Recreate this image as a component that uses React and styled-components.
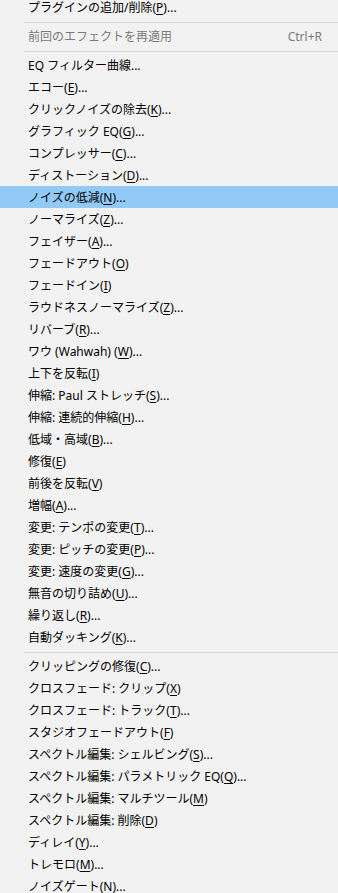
import React from 'react';
import styled, { createGlobalStyle } from 'styled-components';

const GlobalStyle = createGlobalStyle`
  html, body {
    margin: 0;
    padding: 0;
    background: #f2f2f2;
  }
  body {
    font-family: 'Noto Sans', 'Noto Sans CJK JP', sans-serif;
  }
`;

const groups = [
  [{ label: 'プラグインの追加/削除', key: 'P', dots: true }],
  [{ label: '前回のエフェクトを再適用', shortcut: 'Ctrl+R', disabled: true }],
  [
    { label: 'EQ フィルター曲線', dots: true },
    { label: 'エコー', key: 'E', dots: true },
    { label: 'クリックノイズの除去', key: 'K', dots: true },
    { label: 'グラフィック EQ', key: 'G', dots: true },
    { label: 'コンプレッサー', key: 'C', dots: true },
    { label: 'ディストーション', key: 'D', dots: true },
    { label: 'ノイズの低減', key: 'N', dots: true, active: true },
    { label: 'ノーマライズ', key: 'Z', dots: true },
    { label: 'フェイザー', key: 'A', dots: true },
    { label: 'フェードアウト', key: 'O' },
    { label: 'フェードイン', key: 'I' },
    { label: 'ラウドネスノーマライズ', key: 'Z', dots: true },
    { label: 'リバーブ', key: 'R', dots: true },
    { label: 'ワウ (Wahwah) ', key: 'W', dots: true },
    { label: '上下を反転', key: 'I' },
    { label: '伸縮: Paul ストレッチ', key: 'S', dots: true },
    { label: '伸縮: 連続的伸縮', key: 'H', dots: true },
    { label: '低域・高域', key: 'B', dots: true },
    { label: '修復', key: 'E' },
    { label: '前後を反転', key: 'V' },
    { label: '増幅', key: 'A', dots: true },
    { label: '変更: テンポの変更', key: 'T', dots: true },
    { label: '変更: ピッチの変更', key: 'P', dots: true },
    { label: '変更: 速度の変更', key: 'G', dots: true },
    { label: '無音の切り詰め', key: 'U', dots: true },
    { label: '繰り返し', key: 'R', dots: true },
    { label: '自動ダッキング', key: 'K', dots: true },
  ],
  [
    { label: 'クリッピングの修復', key: 'C', dots: true },
    { label: 'クロスフェード: クリップ', key: 'X' },
    { label: 'クロスフェード: トラック', key: 'T', dots: true },
    { label: 'スタジオフェードアウト', key: 'F' },
    { label: 'スペクトル編集: シェルビング', key: 'S', dots: true },
    { label: 'スペクトル編集: パラメトリック EQ', key: 'Q', dots: true },
    { label: 'スペクトル編集: マルチツール', key: 'M' },
    { label: 'スペクトル編集: 削除', key: 'D' },
    { label: 'ディレイ', key: 'Y', dots: true },
    { label: 'トレモロ', key: 'M', dots: true },
    { label: 'ノイズゲート', key: 'N', dots: true },
  ],
];

const Menu = styled.div`
  width: 338px;
  height: 893px;
  overflow: hidden;
  background: #f2f2f2;
`;

const List = styled.ul`
  list-style: none;
  margin: -4px 0 0;
  padding: 0;
`;

const Item = styled.li`
  height: 22px;
  display: flex;
  align-items: center;
  justify-content: space-between;
  padding: 0 16px 0 28px;
  font-size: 12px;
  color: ${(p) => (p.$disabled ? '#7a7a7a' : '#000')};
  background: ${(p) => (p.$active ? '#91c9f7' : 'transparent')};
  white-space: nowrap;
`;

const Label = styled.span`
  u {
    text-decoration: underline;
    text-underline-offset: 2px;
  }
`;

const Shortcut = styled.span`
  color: inherit;
`;

const Separator = styled.li`
  height: 1px;
  margin: 4px 0 2px 24px;
  background: #d7d7d7;
`;

const App = () => {
  return (
    <Menu>
      <GlobalStyle />
      <List>
        {groups.map((group, gi) => (
          <React.Fragment key={gi}>
            {gi > 0 && <Separator />}
            {group.map((item, i) => (
              <Item key={i} $disabled={item.disabled} $active={item.active}>
                <Label>
                  {item.label}
                  {item.key && (
                    <>
                      (<u>{item.key}</u>)
                    </>
                  )}
                  {item.dots && '...'}
                </Label>
                {item.shortcut && <Shortcut>{item.shortcut}</Shortcut>}
              </Item>
            ))}
          </React.Fragment>
        ))}
      </List>
    </Menu>
  );
};

export default App;
